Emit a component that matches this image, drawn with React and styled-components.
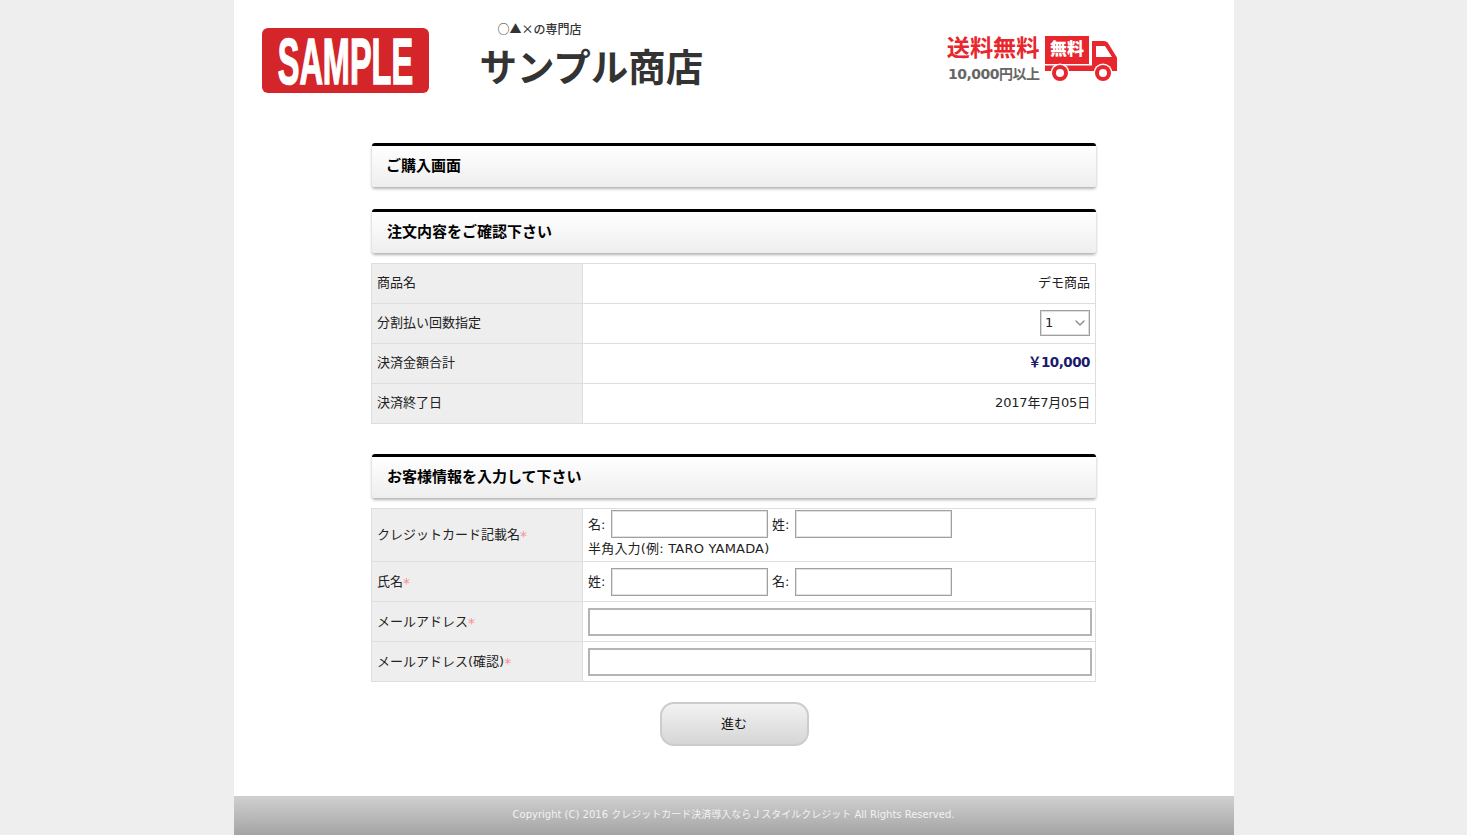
import React from 'react';
import styled, { createGlobalStyle } from 'styled-components';
import { ChevronDown } from 'lucide-react';

const GlobalStyle = createGlobalStyle`
  html, body {
    margin: 0;
    padding: 0;
    height: 100%;
    background: #eeeeee;
  }
  #root {
    height: 100%;
  }
  body {
    font-family: "DejaVu Sans", "Noto Sans CJK JP", sans-serif;
    font-size: 13px;
    color: #222;
  }
`;

const Page = styled.div`
  width: 1000px;
  min-height: 835px;
  margin: 0 auto;
  background: #fff;
  display: flex;
  flex-direction: column;
`;

const Header = styled.header`
  display: flex;
  height: 143px;
  padding: 28px 0 0 28px;
  box-sizing: border-box;
`;

const Logo = styled.div`
  width: 167px;
  height: 65px;
  flex: none;
  padding-top: 1px;
  box-sizing: border-box;
  background: #d3252a;
  border-radius: 6px;
  color: #fff;
  display: flex;
  align-items: center;
  justify-content: center;
`;

const LogoText = styled.span`
  font-family: "Liberation Sans", sans-serif;
  font-weight: 700;
  font-size: 65px;
  line-height: 1;
  display: inline-block;
  flex: none;
  transform: scaleX(0.5);
  white-space: nowrap;
  -webkit-text-stroke: 1.5px #fff;
`;

const Store = styled.div`
  width: 467px;
  margin-left: 51px;
  margin-top: -7px;
`;

const Tagline = styled.div`
  font-family: "Noto Sans CJK JP", sans-serif;
  font-size: 12px;
  font-weight: 500;
  line-height: 16px;
  margin-left: 18px;
  color: #333;
  white-space: nowrap;
`;

const StoreName = styled.div`
  font-family: "Noto Sans CJK JP", sans-serif;
  font-size: 37.500px;
  font-weight: 700;
  line-height: 48px;
  margin-top: 4px;
  color: #333;
  white-space: nowrap;
`;

const Shipping = styled.div`
  display: flex;
  align-items: flex-start;
`;

const ShippingText = styled.div`
  display: flex;
  flex-direction: column;
  align-items: flex-end;
  width: 93px;
  margin-top: 3px;
  font-family: "Noto Sans CJK JP", sans-serif;
  font-weight: 700;
`;

const FreeLabel = styled.div`
  font-size: 23.200px;
  line-height: 30px;
  color: #e8262d;
  white-space: nowrap;
`;

const MinLabel = styled.div`
  font-family: "DejaVu Sans", "Noto Sans CJK JP", sans-serif;
  font-size: 14px;
  line-height: 20px;
  margin-top: 3px;
  color: #666;
  white-space: nowrap;
  letter-spacing: -0.500px;
`;

const TruckIcon = styled.svg`
  width: 72px;
  height: 46px;
  margin: 8px 0 0 5px;
  flex: none;
`;

const Main = styled.main`
  width: 725px;
  margin: 0 auto;
  flex: 1;
`;

const Heading = styled.h2`
  margin: ${(p) => p.$gap || 0}px 0 0 1px;
  width: 724px;
  height: 44px;
  box-sizing: border-box;
  border-top: 3px solid #000;
  border-radius: 3px;
  padding: 0 0 4px ${(p) => p.$inset || 14}px;
  display: flex;
  align-items: center;
  font-family: "Noto Sans CJK JP", sans-serif;
  font-size: 15px;
  font-weight: 700;
  color: #000;
  background: linear-gradient(#ffffff, #eeeeee);
  box-shadow: 0 2px 3px rgba(0, 0, 0, 0.3);
`;

const Table = styled.table`
  width: 725px;
  margin-top: 10px;
  border-collapse: collapse;
  table-layout: fixed;
`;

const Row = styled.tr`
  height: ${(p) => p.$h || 40}px;
`;

const Label = styled.th`
  width: 211px;
  padding: 0 0 ${(p) => p.$lift ?? 4}px 5px;
  box-sizing: border-box;
  border: 1px solid #dedede;
  background: #eeeeee;
  font-weight: 400;
  text-align: left;
  color: #222;
`;

const Value = styled.td`
  padding: 0 5px ${(p) => p.$lift ?? 4}px;
  border: 1px solid #dedede;
  text-align: ${(p) => (p.$right ? 'right' : 'left')};
  color: #222;
`;

const StackedValue = styled.td`
  padding: 1px 5px 0;
  border: 1px solid #dedede;
  vertical-align: top;
  color: #222;
`;

const Price = styled.span`
  font-size: 13.500px;
  font-weight: 700;
  letter-spacing: -0.500px;
  color: #1a1a6e;
`;

const DateText = styled.span`
  letter-spacing: -0.200px;
`;

const SelectBox = styled.div`
  position: relative;
  display: inline-block;
  vertical-align: middle;
  width: 50px;
  height: 26px;
`;

const Select = styled.select`
  appearance: none;
  width: 100%;
  height: 100%;
  box-sizing: border-box;
  border: 1px solid #a0a0a0;
  box-shadow: inset 0 0 0 1px #dddddd;
  border-radius: 0;
  background: #fff;
  padding: 0 0 0 4px;
  font: inherit;
  color: #222;
`;

const Caret = styled(ChevronDown)`
  position: absolute;
  right: 2px;
  top: 5px;
  color: #888;
  pointer-events: none;
`;

const Required = styled.span`
  color: #f78f8f;
  font-size: 14px;
  line-height: 1;
  vertical-align: -2px;
`;

const NameLine = styled.div`
  display: flex;
  align-items: center;
  gap: 4px;
`;

const NameLabel = styled.span`
  width: 19px;
  padding-bottom: 2px;
  white-space: nowrap;
`;

const Input = styled.input`
  width: 157px;
  height: 28px;
  box-sizing: border-box;
  border: 1px solid #a0a0a0;
  box-shadow: inset 0 0 0 1px #e2e2e2;
  border-radius: 0;
  background: #fff;
  padding: 0;
`;

const WideInput = styled(Input)`
  display: block;
  width: 504px;
  border: 2px solid #b4b4b4;
  box-shadow: none;
`;

const Note = styled.div`
  line-height: 18px;
  margin-top: 2px;
  letter-spacing: 0.200px;
`;

const ButtonRow = styled.div`
  display: flex;
  justify-content: center;
  margin: 20px 0 0 1px;
`;

const Button = styled.button`
  width: 149px;
  height: 44px;
  border: 2px solid #cccccc;
  border-radius: 14px;
  background: linear-gradient(#f2f2f2, #d6d6d6);
  font: inherit;
  color: #111;
  padding: 0 0 4px;
`;

const Footer = styled.footer`
  height: 39px;
  box-sizing: border-box;
  border-top: 1px solid #ccc;
  padding-bottom: 5px;
  background: linear-gradient(#cfcfcf, #a4a4a4);
  color: #f2f2f2;
  font-size: 10px;
  display: flex;
  align-items: center;
  justify-content: center;
  white-space: nowrap;
`;

function Truck() {
  return (
    <TruckIcon viewBox="0 0 72 46">
      <rect x="0" y="0" width="44" height="28" fill="#e8262d" />
      <path d="M47 5h12c2 0 3 1 4 2l8 13c1 1 1 2 1 3v12H0v-5.500h47z" fill="#e8262d" />
      <path d="M51 10h9l7 11H51z" fill="#fff" />
      <text x="22" y="19" textAnchor="middle" fontFamily="Noto Sans CJK JP" fontWeight="900" fontSize="17" fill="#fff">無料</text>
      <circle cx="15" cy="37" r="9.500" fill="#fff" />
      <circle cx="15" cy="37" r="8" fill="#e8262d" />
      <circle cx="15" cy="37" r="4" fill="#fff" />
      <circle cx="58" cy="37" r="9.500" fill="#fff" />
      <circle cx="58" cy="37" r="8" fill="#e8262d" />
      <circle cx="58" cy="37" r="4" fill="#fff" />
    </TruckIcon>
  );
}

export default function App() {
  return (
    <Page>
      <GlobalStyle />
      <Header>
        <Logo>
          <LogoText>SAMPLE</LogoText>
        </Logo>
        <Store>
          <Tagline>○▲×の専門店</Tagline>
          <StoreName>サンプル商店</StoreName>
        </Store>
        <Shipping>
          <ShippingText>
            <FreeLabel>送料無料</FreeLabel>
            <MinLabel>10,000円以上</MinLabel>
          </ShippingText>
          <Truck />
        </Shipping>
      </Header>

      <Main>
        <Heading>ご購入画面</Heading>
        <Heading $gap={22} $inset={15}>注文内容をご確認下さい</Heading>
        <Table>
          <tbody>
            <Row>
              <Label>商品名</Label>
              <Value $right>デモ商品</Value>
            </Row>
            <Row>
              <Label>分割払い回数指定</Label>
              <Value $right $lift={2}>
                <SelectBox>
                  <Select defaultValue="1">
                    <option value="1">1</option>
                  </Select>
                  <Caret size={16} />
                </SelectBox>
              </Value>
            </Row>
            <Row>
              <Label>決済金額合計</Label>
              <Value $right $lift={6}>
                <Price>￥10,000</Price>
              </Value>
            </Row>
            <Row>
              <Label>決済終了日</Label>
              <Value $right>
                <DateText>2017年7月05日</DateText>
              </Value>
            </Row>
          </tbody>
        </Table>

        <Heading $gap={30} $inset={15}>お客様情報を入力して下さい</Heading>
        <Table>
          <tbody>
            <Row $h={53}>
              <Label>
                クレジットカード記載名<Required>*</Required>
              </Label>
              <StackedValue>
                <NameLine>
                  <NameLabel>名:</NameLabel>
                  <Input type="text" />
                  <NameLabel>姓:</NameLabel>
                  <Input type="text" />
                </NameLine>
                <Note>半角入力(例: TARO YAMADA)</Note>
              </StackedValue>
            </Row>
            <Row>
              <Label $lift={2}>
                氏名<Required>*</Required>
              </Label>
              <Value $lift={0}>
                <NameLine>
                  <NameLabel>姓:</NameLabel>
                  <Input type="text" />
                  <NameLabel>名:</NameLabel>
                  <Input type="text" />
                </NameLine>
              </Value>
            </Row>
            <Row>
              <Label $lift={2}>
                メールアドレス<Required>*</Required>
              </Label>
              <Value $lift={0}>
                <WideInput type="text" />
              </Value>
            </Row>
            <Row>
              <Label $lift={2}>
                メールアドレス(確認)<Required>*</Required>
              </Label>
              <Value $lift={0}>
                <WideInput type="text" />
              </Value>
            </Row>
          </tbody>
        </Table>
        <ButtonRow>
          <Button type="button">進む</Button>
        </ButtonRow>
      </Main>

      <Footer>Copyright (C) 2016 クレジットカード決済導入ならＪスタイルクレジット All Rights Reserved.</Footer>
    </Page>
  );
}
